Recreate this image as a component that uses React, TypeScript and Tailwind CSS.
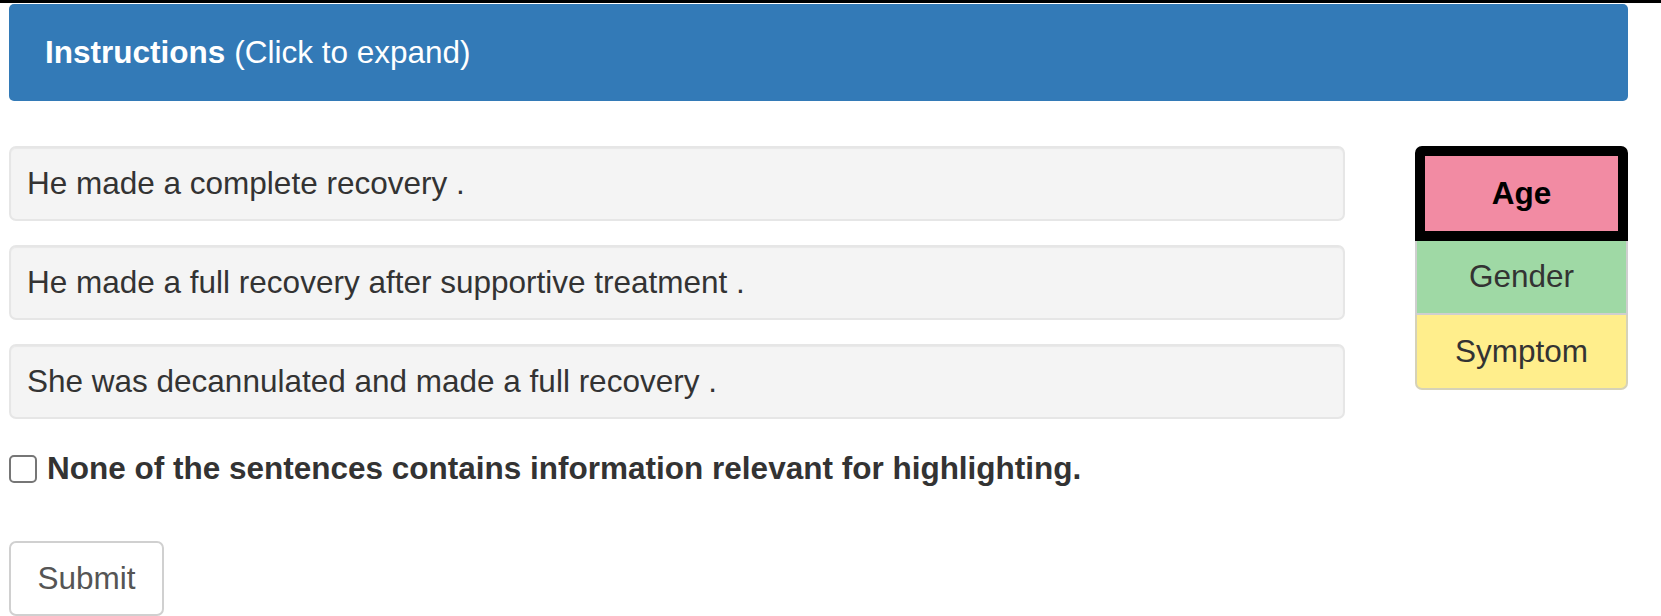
import { useState } from "react";

const sentences = [
	"He made a complete recovery .",
	"He made a full recovery after supportive treatment .",
	"She was decannulated and made a full recovery .",
];

export default function App() {
	const [none, setNone] = useState(false);
	return (
		<div className="min-h-screen bg-white border-t-[3px] border-black font-['Liberation_Sans',Arial,sans-serif] text-[31.5px] leading-none text-[#333]">
			<div className="pt-px pl-[9px] pr-[33px]">
				<div className="h-[97px] rounded-[5px] bg-[#337ab7] flex items-center pl-[36px] text-white">
					<span className="font-bold">Instructions</span>
					<span className="ml-[9px]">(Click to expand)</span>
				</div>
			</div>

			<div className="mt-[45px] flex pl-[9px] pr-[33px]">
				<div className="w-[1336px] flex flex-col">
					<div className="flex flex-col gap-[24px]">
						{sentences.map((s) => (
							<div
								key={s}
								className="h-[75px] flex items-center pl-[16px] rounded-[7px] border-2 border-[#e6e6e6] bg-[#f4f4f4] shadow-[inset_0_1px_1px_rgba(0,0,0,0.05)]"
							>
								{s}
							</div>
						))}
					</div>

					<label className="mt-[36px] flex items-center h-[28px]">
						<input
							type="checkbox"
							checked={none}
							onChange={() => setNone(!none)}
							className="appearance-none w-[28px] h-[28px] rounded-[5px] border-2 border-[#767676] bg-white"
						/>
						<span className="ml-[10px] font-bold">
							None of the sentences contains information relevant for highlighting.
						</span>
					</label>

					<div className="mt-[58px]">
						<button className="w-[155px] h-[75px] rounded-[7px] border-2 border-[#d0d0d0] bg-white text-[#555]">
							Submit
						</button>
					</div>
				</div>

				<div className="ml-auto w-[213px] flex flex-col text-center">
					<div className="h-[95px] flex items-center justify-center border-[10px] border-black rounded-t-[7px] bg-[#f28ba3] font-bold text-black">
						Age
					</div>
					<div className="h-[74px] flex items-center justify-center border-x-2 border-b-2 border-[#cfcfcf] bg-[#9fd9a5]">
						Gender
					</div>
					<div className="h-[75px] flex items-center justify-center border-x-2 border-b-2 border-[#d6d2b8] rounded-b-[7px] bg-[#ffee8c]">
						Symptom
					</div>
				</div>
			</div>
		</div>
	);
}
